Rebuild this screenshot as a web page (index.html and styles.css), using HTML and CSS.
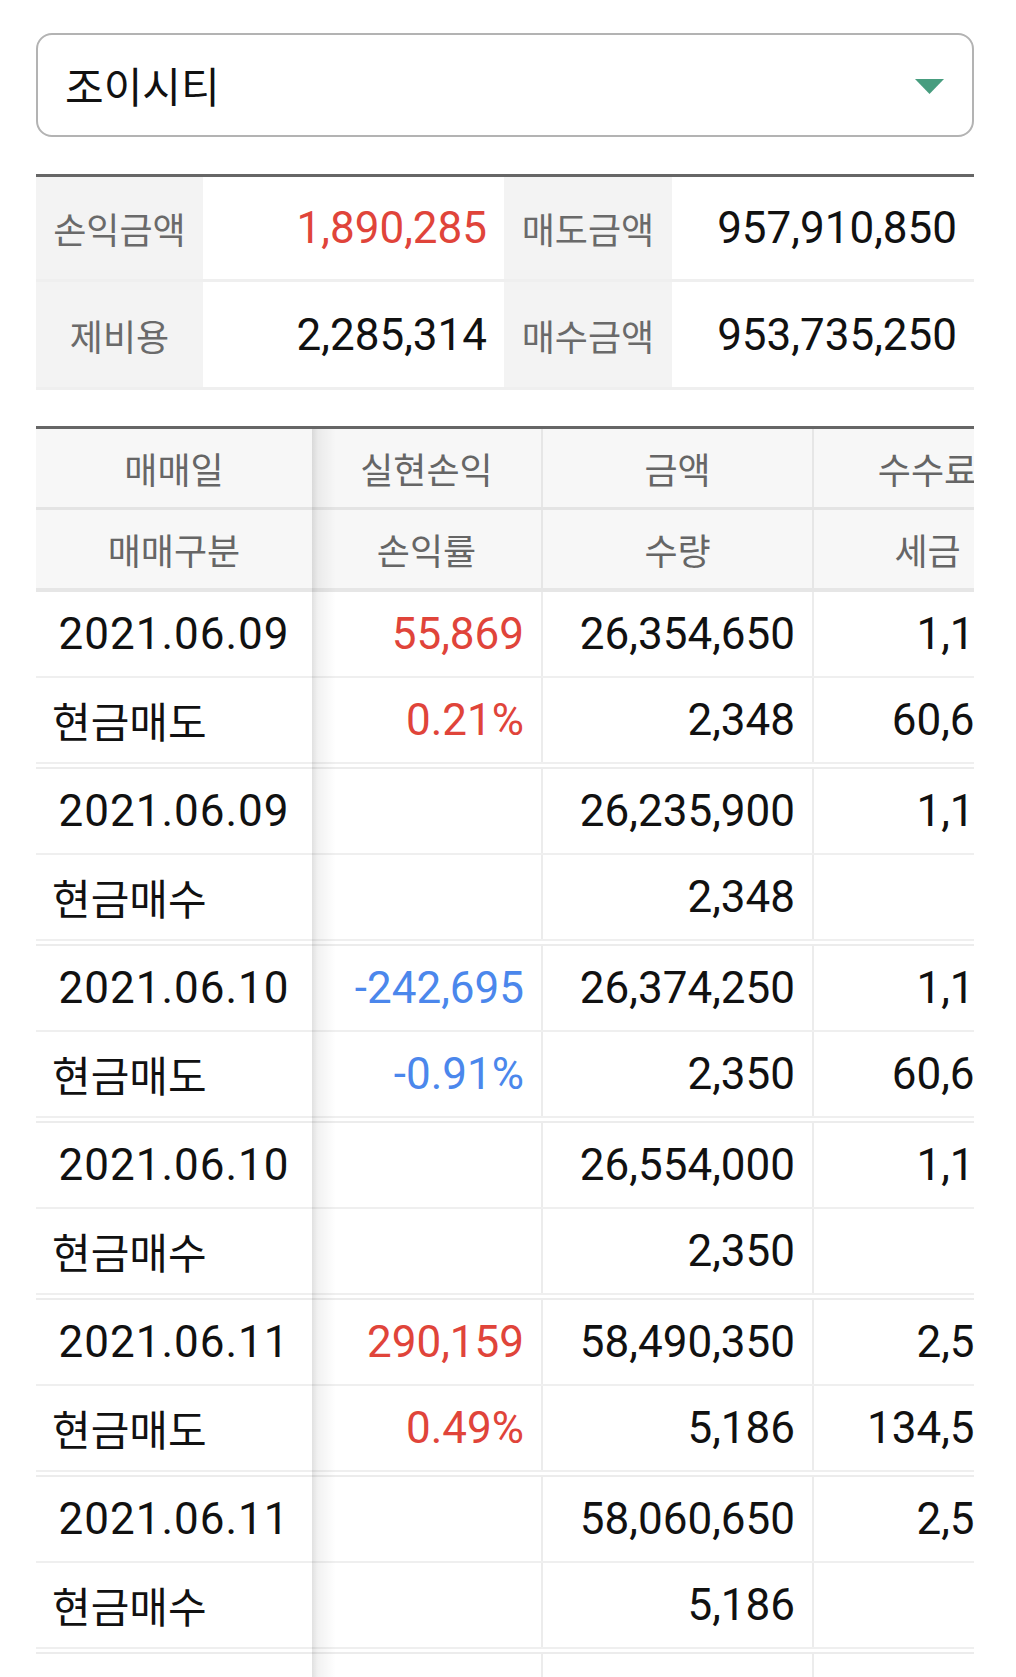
FILE: index.html
```html
<!DOCTYPE html>
<html lang="ko">
<head>
<meta charset="utf-8">
<title>매매내역</title>
<link rel="stylesheet" href="styles.css">
</head>
<body>
<div class="page">
  <div class="select">
    <span class="select-text">조이시티</span>
    <svg class="caret" viewBox="0 0 29 15" width="29" height="15"><polygon points="0,0 29,0 14.5,15" fill="#479d7f"/></svg>
  </div>

  <div class="summary">
    <div class="srow srow1">
      <div class="slabel">손익금액</div>
      <div class="sval up">1,890,285</div>
      <div class="slabel">매도금액</div>
      <div class="sval">957,910,850</div>
    </div>
    <div class="srow srow2">
      <div class="slabel">제비용</div>
      <div class="sval">2,285,314</div>
      <div class="slabel">매수금액</div>
      <div class="sval">953,735,250</div>
    </div>
  </div>

  <div class="grid-wrap">
    <div class="grid">
      <div class="hrow hrow1">
        <div class="hc">매매일</div>
        <div class="hc bd">실현손익</div>
        <div class="hc bd">금액</div>
        <div class="hc bd">수수료</div>
      </div>
      <div class="hrow hrow2">
        <div class="hc">매매구분</div>
        <div class="hc bd">손익률</div>
        <div class="hc bd">수량</div>
        <div class="hc bd">세금</div>
      </div>

      <div class="pair">
        <div class="drow">
          <div class="dc date">2021.06.09</div>
          <div class="dc num bd up">55,869</div>
          <div class="dc num bd">26,354,650</div>
          <div class="dc num bd">1,133</div>
        </div>
        <div class="drow">
          <div class="dc kind">현금매도</div>
          <div class="dc num bd up">0.21%</div>
          <div class="dc num bd">2,348</div>
          <div class="dc num bd">60,615</div>
        </div>
      </div>

      <div class="pair">
        <div class="drow">
          <div class="dc date">2021.06.09</div>
          <div class="dc num bd"></div>
          <div class="dc num bd">26,235,900</div>
          <div class="dc num bd">1,128</div>
        </div>
        <div class="drow">
          <div class="dc kind">현금매수</div>
          <div class="dc num bd"></div>
          <div class="dc num bd">2,348</div>
          <div class="dc num bd"></div>
        </div>
      </div>

      <div class="pair">
        <div class="drow">
          <div class="dc date">2021.06.10</div>
          <div class="dc num bd down">-242,695</div>
          <div class="dc num bd">26,374,250</div>
          <div class="dc num bd">1,134</div>
        </div>
        <div class="drow">
          <div class="dc kind">현금매도</div>
          <div class="dc num bd down">-0.91%</div>
          <div class="dc num bd">2,350</div>
          <div class="dc num bd">60,660</div>
        </div>
      </div>

      <div class="pair">
        <div class="drow">
          <div class="dc date">2021.06.10</div>
          <div class="dc num bd"></div>
          <div class="dc num bd">26,554,000</div>
          <div class="dc num bd">1,141</div>
        </div>
        <div class="drow">
          <div class="dc kind">현금매수</div>
          <div class="dc num bd"></div>
          <div class="dc num bd">2,350</div>
          <div class="dc num bd"></div>
        </div>
      </div>

      <div class="pair">
        <div class="drow">
          <div class="dc date">2021.06.11</div>
          <div class="dc num bd up">290,159</div>
          <div class="dc num bd">58,490,350</div>
          <div class="dc num bd">2,515</div>
        </div>
        <div class="drow">
          <div class="dc kind">현금매도</div>
          <div class="dc num bd up">0.49%</div>
          <div class="dc num bd">5,186</div>
          <div class="dc num bd">134,527</div>
        </div>
      </div>

      <div class="pair">
        <div class="drow">
          <div class="dc date">2021.06.11</div>
          <div class="dc num bd"></div>
          <div class="dc num bd">58,060,650</div>
          <div class="dc num bd">2,506</div>
        </div>
        <div class="drow">
          <div class="dc kind">현금매수</div>
          <div class="dc num bd"></div>
          <div class="dc num bd">5,186</div>
          <div class="dc num bd"></div>
        </div>
      </div>

      <div class="pair">
        <div class="drow">
          <div class="dc date">2021.06.14</div>
          <div class="dc num bd"></div>
          <div class="dc num bd">58,112,500</div>
          <div class="dc num bd">2,509</div>
        </div>
        <div class="drow">
          <div class="dc kind">현금매도</div>
          <div class="dc num bd"></div>
          <div class="dc num bd">5,186</div>
          <div class="dc num bd">133,658</div>
        </div>
      </div>
    </div>
  </div>
</div>
</body>
</html>
```

FILE: styles.css
```css
html, body {
  margin: 0;
  padding: 0;
  background: #ffffff;
}

body {
  font-family: Roboto, "Noto Sans CJK KR", sans-serif;
  color: #111111;
  overflow: hidden;
}

.page {
  width: 938px;
  padding: 33px 42px 0 36px;
}

/* dropdown */
.select {
  box-sizing: border-box;
  height: 104px;
  border: 2px solid #b3b3b3;
  border-radius: 16px;
  display: flex;
  align-items: center;
  justify-content: space-between;
  padding: 0 28px 0 27px;
}

.select-text {
  font-family: "Noto Sans CJK KR", sans-serif;
  font-size: 42px;
  line-height: 1;
  color: #111111;
}

.caret {
  display: block;
  margin-top: 2px;
}

/* summary */
.summary {
  margin-top: 37px;
  border-top: 3px solid #666666;
}

.srow {
  display: grid;
  grid-template-columns: 167px 301px 168px 302px;
  border-bottom: 3px solid #efefef;
}

.srow1 { height: 102px; }
.srow2 { height: 105px; }

.slabel {
  background: #f3f3f3;
  display: flex;
  align-items: center;
  justify-content: center;
  font-family: "Noto Sans CJK KR", sans-serif;
  font-size: 36px;
  color: #6a6a6a;
  line-height: 1;
}

.sval {
  display: flex;
  align-items: center;
  justify-content: flex-end;
  padding-right: 17px;
  font-size: 44px;
  line-height: 1;
  color: #111111;
}

.up { color: #e0443a; }
.down { color: #4b87ec; }
.sval.up { color: #e0443a; }

/* table */
.grid-wrap {
  position: relative;
  margin-top: 36px;
  border-top: 3px solid #666666;
  overflow: hidden;
  height: 1300px;
}

.grid-wrap::after {
  content: "";
  position: absolute;
  top: 0;
  bottom: 0;
  left: 276px;
  width: 24px;
  background: linear-gradient(90deg, rgba(0,0,0,0.12) 0, rgba(0,0,0,0.05) 6px, rgba(0,0,0,0) 24px);
  pointer-events: none;
}

.grid {
  width: 1007px;
}

.hrow,
.drow {
  display: grid;
  grid-template-columns: 276px 231px 271px 229px;
}

.hrow {
  background: #f7f7f7;
  height: 78px;
}

.hrow1 { border-bottom: 3px solid #e4e4e4; }
.hrow2 { border-bottom: 4px solid #e6e6e6; }

.hc {
  display: flex;
  align-items: center;
  justify-content: center;
  font-family: "Noto Sans CJK KR", sans-serif;
  font-size: 36px;
  line-height: 1;
  color: #666666;
}

.bd {
  border-right: 2px solid #ececec;
}

.hc.bd {
  border-right-color: #e6e6e6;
}

.pair + .pair {
  margin-top: 3px;
  border-top: 2px solid #ececec;
}

.drow {
  height: 84px;
  border-bottom: 2px solid #efefef;
}

.dc {
  display: flex;
  align-items: center;
  font-size: 44px;
  line-height: 1;
  color: #111111;
  white-space: nowrap;
}

.dc.up { color: #e0443a; }
.dc.down { color: #4b87ec; }

.date {
  justify-content: center;
  letter-spacing: 1px;
}

.kind {
  font-family: "Noto Sans CJK KR", sans-serif;
  font-size: 42px;
  padding-left: 16px;
}

.num {
  justify-content: flex-end;
  padding-right: 17px;
}
```
